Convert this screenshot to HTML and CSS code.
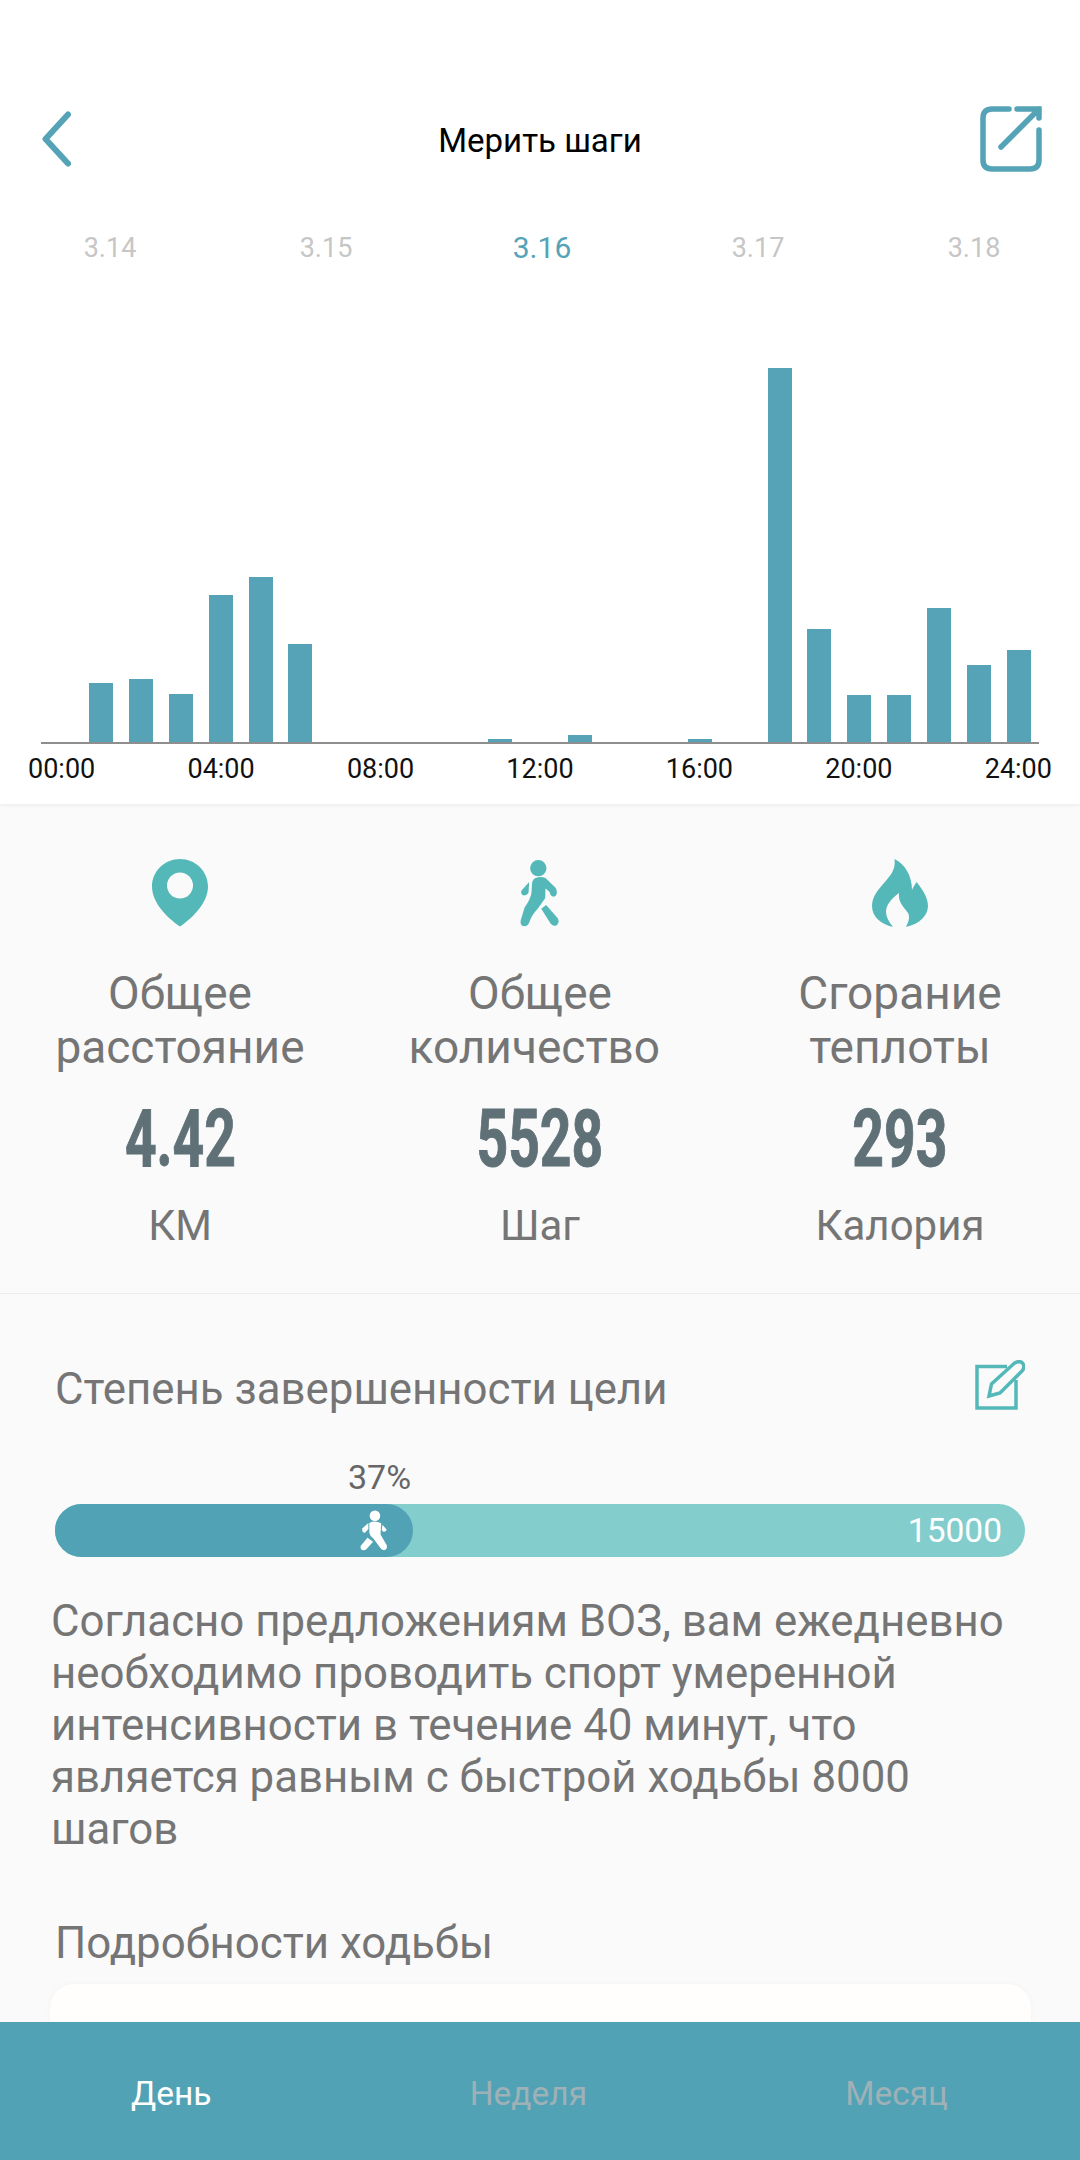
FILE: index.html
```html
<!DOCTYPE html>
<html lang="ru">

<head>
    <title>Мерить шаги</title>
    <meta charset="utf-8" />
    <link rel="stylesheet" href="styles.css">
</head>

<body>
    <div class="app">
        <div class="content">
            <div class="top">
                <div class="header">
                    <svg class="back-icon" viewBox="0 0 29 56">
                        <path d="M26 3.5 L3.5 28 L26 52.5" />
                    </svg>
                    <div class="title">Мерить шаги</div>
                    <svg class="share-icon" viewBox="0 0 62 66">
                        <path d="M29 3 H12 Q3 3 3 12 V54 Q3 63 12 63 H50 Q59 63 59 54 V24" />
                        <path d="M21 41 L59 3 M37 3 H59 V12" />
                    </svg>
                </div>

                <div class="dates">
                    <span>3.14</span>
                    <span>3.15</span>
                    <span class="date-active">3.16</span>
                    <span>3.17</span>
                    <span>3.18</span>
                </div>

                <!-- one slot per hour, the first slot stays empty -->
                <div class="chart">
                    <i></i>
                    <i style="height:59px"></i>
                    <i style="height:63px"></i>
                    <i style="height:48px"></i>
                    <i style="height:147px"></i>
                    <i style="height:165px"></i>
                    <i style="height:98px"></i>
                    <i></i>
                    <i></i>
                    <i></i>
                    <i></i>
                    <i style="height:3px"></i>
                    <i></i>
                    <i style="height:7px"></i>
                    <i></i>
                    <i></i>
                    <i style="height:3px"></i>
                    <i></i>
                    <i style="height:374px"></i>
                    <i style="height:113px"></i>
                    <i style="height:47px"></i>
                    <i style="height:47px"></i>
                    <i style="height:134px"></i>
                    <i style="height:77px"></i>
                    <i style="height:92px"></i>
                </div>
                <div class="hours">
                    <span>00:00</span>
                    <span>04:00</span>
                    <span>08:00</span>
                    <span>12:00</span>
                    <span>16:00</span>
                    <span>20:00</span>
                    <span>24:00</span>
                </div>
            </div>

            <div class="stats">
                <div class="stat">
                    <svg class="stat-icon" viewBox="0 0 56 68">
                        <path fill-rule="evenodd" d="M28 0C12.5 0 0 12.3 0 27.5C0 43 14 58 28 67.5C42 58 56 43 56 27.5C56 12.3 43.5 0 28 0ZM28 13.5a13 13 0 1 1 0 26a13 13 0 1 1 0 -26Z" />
                    </svg>
                    <div class="stat-label">Общее<br>расстояние</div>
                    <div class="stat-value"><span>4.42</span></div>
                    <div class="stat-unit">КМ</div>
                </div>
                <div class="stat">
                    <svg class="stat-icon" viewBox="118 56 122 208">
                        <circle cx="174" cy="84" r="25" />
                        <path d="M165 114 Q182 108 196 114 L226 143 Q232 150 230 164 Q226 174 216 170 Q210 166 208 156 L196 146 L195 176 L172 208 Q152 230 148 246 Q144 262 130 262 Q118 260 120 244 L132 204 Q150 180 153 160 L155 128 Q157 118 165 114Z" />
                        <path d="M146 126 L122 153 Q120 166 130 168 Q140 166 144 160Z" />
                        <path d="M183 208 L198 197 L234 238 Q240 252 228 260 Q218 262 212 254Z" />
                    </svg>
                    <div class="stat-label">Общее<br>количество&nbsp;</div>
                    <div class="stat-value"><span>5528</span></div>
                    <div class="stat-unit">Шаг</div>
                </div>
                <div class="stat">
                    <svg class="stat-icon" viewBox="0 0 56 68">
                        <path d="M22.5 0C33 5 40 17 40 31C41 28 43 26 44.5 23C51 31 56 39 56 47C56 56 48 65 34 68C37 62 38 58 36 54C31 47 26 43 27 34C19 40 14 46 14 53C14 58 17 63 21 68C9 65 0 58 0 47C0 37 7 30 12 24C18 17 24 11 22.5 0Z" />
                    </svg>
                    <div class="stat-label">Сгорание<br>теплоты</div>
                    <div class="stat-value"><span>293</span></div>
                    <div class="stat-unit">Калория</div>
                </div>
            </div>

            <div class="goal">
                <div class="goal-head">
                    <div class="goal-title">Степень завершенности цели</div>
                    <svg class="edit-icon" viewBox="0 0 50 50">
                        <path d="M32 6.5 H2 V48 H41 V20" />
                        <path d="M14 36 L16.5 24 L39 3.5 Q44 0 47.5 3 Q50.5 7 47 11 L25 33 Z" />
                    </svg>
                </div>
                <div class="goal-pct">37%</div>
                <div class="goal-bar">
                    <div class="goal-fill">
                        <svg class="fill-walker" viewBox="120 175 90 135">
                            <circle cx="168" cy="195" r="17" />
                            <path d="M150 218 Q168 208 188 219 L186 255 L206 290 Q209 304 197 306 Q190 306 185 298 L163 268 Q152 262 150 250 Z" />
                            <path d="M147 218 L128 235 Q124 248 136 250 L147 238 Z" />
                            <path d="M192 224 L206 240 Q202 249 194 246 L190 241 Z" />
                            <path d="M144 266 L122 292 Q120 305 131 306 Q136 306 142 301 L162 279 Z" />
                        </svg>
                    </div>
                    <span class="goal-max">15000</span>
                </div>
                <p class="goal-text">Согласно предложениям ВОЗ, вам ежедневно необходимо проводить спорт умеренной интенсивности в течение 40 минут, что является равным с быстрой ходьбы 8000 шагов</p>
                <div class="details-title">Подробности ходьбы</div>
                <div class="details-card"></div>
            </div>
        </div>

        <div class="tabs">
            <span class="tab-active">День</span>
            <span>Неделя</span>
            <span>Месяц</span>
        </div>
    </div>
</body>

</html>
```

FILE: styles.css
```css
body {
    margin: 0;
    font-family: Roboto, "Noto Sans", sans-serif;
    background: #fafafb;
}

.app {
    display: flex;
    flex-direction: column;
    width: 1080px;
    height: 2160px;
    overflow: hidden;
}

.content {
    flex: 1;
    min-height: 0;
    overflow: hidden;
}

/* top white part */
.top {
    height: 804px;
    background: #fff;
    box-shadow: 0 1px 4px rgba(0, 0, 0, 0.07);
}

.header {
    display: grid;
    grid-template-columns: 1fr auto 1fr;
    align-items: center;
    padding: 106px 40px 0;
}

.back-icon {
    width: 29px;
    height: 56px;
    margin-left: 2px;
    fill: none;
    stroke: #55a3b6;
    stroke-width: 6;
    stroke-linecap: round;
    stroke-linejoin: round;
}

.title {
    margin-top: 3px;
    font-size: 33px;
    line-height: 40px;
    color: #000;
}

.share-icon {
    justify-self: end;
    width: 62px;
    height: 66px;
    margin-right: -2px;
    fill: none;
    stroke: #55a3b6;
    stroke-width: 5.5;
    stroke-linecap: round;
}

.dates {
    display: grid;
    grid-template-columns: repeat(5, 216px);
    margin: 56px 0 0 2px;
    text-align: center;
    font-size: 27px;
    line-height: 40px;
    color: #c6c6c6;
}

.date-active {
    font-size: 30px;
    color: #55a3b6;
}

.chart {
    display: grid;
    grid-template-columns: repeat(25, 1fr);
    align-items: end;
    justify-items: center;
    height: 474px;
    margin: 0 41px;
    border-bottom: 2px solid #8e8e8e;
}

.chart i {
    display: block;
    width: 24px;
    background: #56a3b7;
}

.hours {
    display: flex;
    justify-content: space-between;
    margin-top: 10px;
    padding: 0 28px;
    font-size: 27px;
    line-height: 30px;
    color: #111;
}

/* three totals */
.stats {
    display: grid;
    grid-template-columns: repeat(3, 360px);
    padding: 55px 0 42px;
    border-bottom: 1px solid #ececec;
    text-align: center;
    color: #757575;
}

.stat-icon {
    display: block;
    height: 68px;
    margin: 0 auto;
    fill: #54b8b8;
}

.stat-label {
    margin-top: 39px;
    font-size: 46px;
    line-height: 54px;
}

.stat-value {
    margin-top: 25px;
    font-size: 80px;
    line-height: 80px;
    font-weight: 700;
    color: #5f7177;
}

.stat-value span {
    display: inline-block;
    transform: scaleX(0.69);
    -webkit-text-stroke: 1px #5f7177;
}

.stat-unit {
    margin-top: 22px;
    font-size: 42px;
    line-height: 50px;
}

/* goal part */
.goal {
    padding-top: 66px;
    color: #757575;
}

.goal-head {
    display: flex;
    justify-content: space-between;
    align-items: flex-end;
    padding: 0 55px;
}

.goal-title {
    font-size: 43.8px;
    line-height: 42px;
}

.edit-icon {
    width: 50px;
    height: 50px;
    fill: none;
    stroke: #54b8b8;
    stroke-width: 3.5;
}

.goal-pct {
    margin: 49px 0 0 348px;
    font-size: 34px;
    line-height: 36px;
    color: #666;
}

.goal-bar {
    display: flex;
    justify-content: space-between;
    align-items: center;
    height: 53px;
    margin: 9px 55px 0;
    border-radius: 27px;
    background: #83cdcd;
}

.goal-fill {
    display: flex;
    justify-content: flex-end;
    align-items: center;
    box-sizing: border-box;
    width: 358px;
    height: 100%;
    padding-right: 25px;
    border-radius: 27px;
    background: #52a2b6;
}

.fill-walker {
    width: 28px;
    height: 43px;
    fill: #fff;
}

.goal-max {
    padding-right: 23px;
    font-size: 33.5px;
    color: #fff;
}

.goal-text {
    margin: 38px 51px 0;
    font-size: 43.8px;
    line-height: 52px;
}

.details-title {
    margin: 63px 0 0 55px;
    font-size: 43.8px;
    line-height: 50px;
}

.details-card {
    height: 100px;
    margin: 16px 49px 0 50px;
    border-radius: 24px;
    background: #fffefd;
    box-shadow: 0 0 6px rgba(0, 0, 0, 0.03);
}

/* bottom tabs */
.tabs {
    display: flex;
    flex: 0 0 134px;
    justify-content: space-between;
    align-items: center;
    padding: 4px 132px 0 131px;
    background: #52a2b6;
    font-size: 33.5px;
    color: #9db1b6;
}

.tab-active {
    color: #fff;
}
```
